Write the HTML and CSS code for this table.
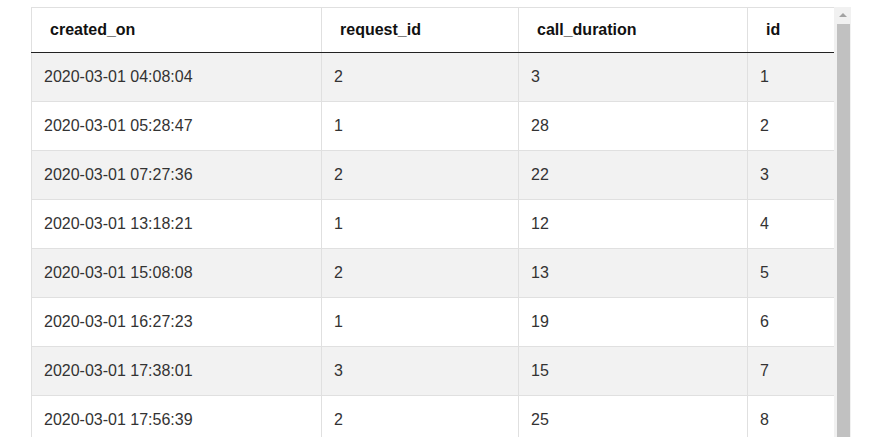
FILE: index.html
```html
<!DOCTYPE html>
<html>
<head>
<meta charset="utf-8">
<link rel="stylesheet" href="styles.css">
</head>
<body>
<div class="frame">
  <div class="viewport">
    <table class="grid">
      <colgroup>
        <col class="c1"><col class="c2"><col class="c3"><col class="c4">
      </colgroup>
      <thead>
        <tr><th>created_on</th><th>request_id</th><th>call_duration</th><th>id</th></tr>
      </thead>
      <tbody>
        <tr><td>2020-03-01 04:08:04</td><td>2</td><td>3</td><td>1</td></tr>
        <tr><td>2020-03-01 05:28:47</td><td>1</td><td>28</td><td>2</td></tr>
        <tr><td>2020-03-01 07:27:36</td><td>2</td><td>22</td><td>3</td></tr>
        <tr><td>2020-03-01 13:18:21</td><td>1</td><td>12</td><td>4</td></tr>
        <tr><td>2020-03-01 15:08:08</td><td>2</td><td>13</td><td>5</td></tr>
        <tr><td>2020-03-01 16:27:23</td><td>1</td><td>19</td><td>6</td></tr>
        <tr><td>2020-03-01 17:38:01</td><td>3</td><td>15</td><td>7</td></tr>
        <tr><td>2020-03-01 17:56:39</td><td>2</td><td>25</td><td>8</td></tr>
      </tbody>
    </table>
  </div>
  <div class="scrollbar">
    <div class="arrow"></div>
    <div class="thumb"></div>
  </div>
</div>
</body>
</html>
```

FILE: styles.css
```css
html, body {
  margin: 0;
  padding: 0;
  background: #ffffff;
  overflow: hidden;
  height: 437px;
}

.frame {
  display: flex;
  margin: 7px 0 0 31px;
  height: 430px;
  overflow: hidden;
}

.viewport {
  width: 803px;
  overflow: hidden;
}

.grid {
  border-collapse: collapse;
  table-layout: fixed;
  width: 803px;
  font-family: "Liberation Sans", Arial, sans-serif;
  font-size: 16px;
}

.c1 { width: 290px; }
.c2 { width: 197px; }
.c3 { width: 229px; }
.c4 { width: 87px; }

.grid th {
  height: 44px;
  padding: 0 0 0 18px;
  text-align: left;
  font-weight: bold;
  color: #111111;
  border: 1px solid #e0e0e0;
  border-bottom: 1px solid #222222;
}

.grid td {
  height: 48px;
  padding: 0 0 0 12px;
  color: #333333;
  border: 1px solid #e0e0e0;
}

.grid tbody tr:nth-child(odd) td {
  background: #f2f2f2;
}

.scrollbar {
  width: 17px;
  background: #f1f1f1;
  display: flex;
  flex-direction: column;
  align-items: center;
}

.arrow {
  width: 0;
  height: 0;
  margin-top: 6px;
  margin-bottom: 7px;
  border-left: 4px solid transparent;
  border-right: 4px solid transparent;
  border-bottom: 4px solid #a3a3a3;
}

.thumb {
  width: 13px;
  flex: 1;
  margin-left: 2px;
  background: #c1c1c1;
}
```
